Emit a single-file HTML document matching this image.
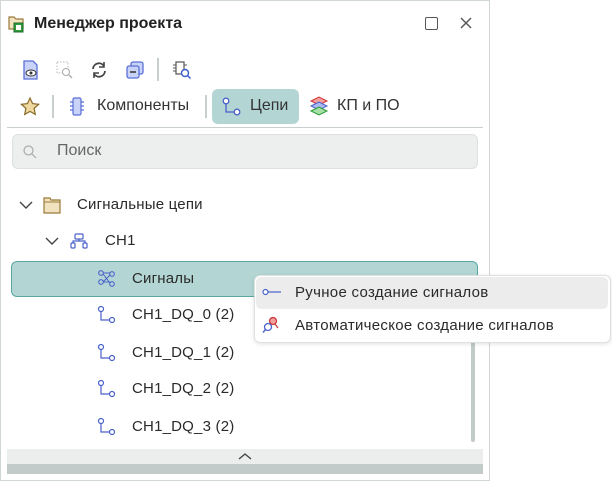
<!DOCTYPE html>
<html><head><meta charset="utf-8"><style>
*{margin:0;padding:0;box-sizing:border-box}
body{width:612px;height:481px;background:#fff;font-family:"Liberation Sans","DejaVu Sans",sans-serif;position:relative;overflow:hidden;color:#222}
.panel{position:absolute;left:0;top:0;width:490px;height:481px;border:1px solid #cfd6d4;background:#fff}
.abs{position:absolute}
.t{font-size:15px;color:#2a2a2a;white-space:nowrap;letter-spacing:0.2px}
svg{position:absolute;overflow:visible}
</style></head><body>
<div class="panel"></div>
<!-- title -->
<svg style="left:8px;top:14px" width="18" height="20" viewBox="0 0 18 20"><path d="M1 3h5l2 2h7v10H1z" fill="#f1e3c0" stroke="#9a7a3a" stroke-width="1.2"/><rect x="6" y="9" width="9" height="9" fill="#2e9b3c" stroke="#1d6e28"/><rect x="8" y="11" width="5" height="5" fill="#fff"/></svg>
<div class="abs" style="left:34px;top:15px;font-size:16px;font-weight:bold;color:#222">Менеджер проекта</div>
<div class="abs" style="left:425px;top:17px;width:13px;height:13px;border:1.5px solid #555;border-radius:2px"></div>
<svg style="left:460px;top:17px" width="12" height="12"><path d="M1 1L11 11M11 1L1 11" stroke="#555" stroke-width="1.4"/></svg>
<!-- toolbar -->
<svg style="left:22px;top:60px" width="18" height="20"><path d="M2 1h9l4 4v14H2z" fill="#c9d3f7" stroke="#5a6fd6" stroke-width="1.3"/><ellipse cx="9" cy="13" rx="5" ry="3" fill="#fff" stroke="#333"/><circle cx="9" cy="13" r="1.5" fill="#333"/></svg>
<svg style="left:56px;top:61px" width="18" height="18"><rect x="1" y="1" width="11" height="11" fill="none" stroke="#bbb" stroke-dasharray="1.5 1.5"/><circle cx="10" cy="11" r="3.5" fill="#fff" stroke="#aaa"/><path d="M13 14l3 3" stroke="#aaa" stroke-width="1.3"/></svg>
<svg style="left:90px;top:61px" width="18" height="18"><path d="M3 8a6 6 0 0 1 11-3M15 10a6 6 0 0 1-11 3" fill="none" stroke="#444" stroke-width="1.8"/><path d="M14 1v5h-5M4 17v-5h5" fill="none" stroke="#444" stroke-width="1.6"/></svg>
<svg style="left:126px;top:61px" width="18" height="18"><rect x="5" y="1" width="12" height="12" rx="2" fill="#c9d3f7" stroke="#5a6fd6" stroke-width="1.3"/><rect x="1" y="5" width="12" height="12" rx="2" fill="#c9d3f7" stroke="#5a6fd6" stroke-width="1.3"/><path d="M4 11h6" stroke="#333" stroke-width="1.5"/></svg>
<div class="abs" style="left:157px;top:58px;width:2px;height:23px;background:#c9cfcf"></div>
<svg style="left:172px;top:60px" width="20" height="20"><rect x="4" y="2" width="8" height="12" fill="#fff" stroke="#555" stroke-width="1.2"/><path d="M1 5h3M1 8h3M1 11h3M12 5h3" stroke="#555"/><circle cx="13" cy="13" r="3.5" fill="#fff" stroke="#3a5bd0" stroke-width="1.4"/><path d="M15.5 15.5l3 3" stroke="#3a5bd0" stroke-width="1.5"/></svg>
<!-- tabs -->
<svg style="left:20px;top:97px" width="20" height="19"><path d="M10 1l2.6 5.6 6 .7-4.5 4.1 1.2 6L10 14.4 4.7 17.4l1.2-6L1.4 7.3l6-.7z" fill="#f0d9a0" stroke="#8a6a2a" stroke-width="1.2"/></svg>
<div class="abs" style="left:52px;top:95px;width:2px;height:23px;background:#c9cfcf"></div>
<svg style="left:70px;top:97px" width="14" height="20"><rect x="3" y="1" width="8" height="17" rx="1.5" fill="#c9d3f7" stroke="#5a6fd6" stroke-width="1.2"/><path d="M0 5h3M0 9h3M0 13h3M11 5h3M11 9h3M11 13h3" stroke="#5a6fd6" stroke-width="1.2"/></svg>
<div class="abs t" style="left:97px;top:97px;font-size:16px;color:#333;letter-spacing:0">Компоненты</div>
<div class="abs" style="left:205px;top:95px;width:2px;height:23px;background:#c9cfcf"></div>
<div class="abs" style="left:212px;top:89px;width:87px;height:35px;background:#b3d6d5;border-radius:6px"></div>
<svg style="left:222px;top:97px" width="20" height="20"><circle cx="4" cy="4" r="2.8" fill="#fff" stroke="#4a62c9" stroke-width="1.3"/><circle cx="15" cy="15" r="2.8" fill="#fff" stroke="#4a62c9" stroke-width="1.3"/><path d="M4 7v8h8" fill="none" stroke="#4a62c9" stroke-width="1.3"/></svg>
<div class="abs t" style="left:250px;top:97px;font-size:16px;color:#333;letter-spacing:0">Цепи</div>
<svg style="left:309px;top:96px" width="20" height="22"><path d="M2 5l8-4 8 4-8 4z" fill="#f4a0a0" stroke="#c33" /><path d="M2 10l8-4 8 4-8 4z" fill="#a9baf5" stroke="#4a62c9"/><path d="M2 15l8-4 8 4-8 4z" fill="#a5e0a5" stroke="#2a9a3a"/></svg>
<div class="abs t" style="left:337px;top:97px;font-size:16px;color:#333;letter-spacing:0">КП и ПО</div>
<div class="abs" style="left:7px;top:127px;width:476px;height:1px;background:#c9cfcf"></div>
<!-- search -->
<div class="abs" style="left:12px;top:134px;width:466px;height:35px;background:#ecefee;border:1px solid #dde2e1;border-radius:6px"></div>
<svg style="left:23px;top:145px" width="14" height="14"><circle cx="5.5" cy="5.5" r="4.5" fill="none" stroke="#aaa" stroke-width="1.2"/><path d="M9 9l4 4" stroke="#aaa" stroke-width="1.2"/></svg>
<div class="abs t" style="left:57px;top:142px;font-size:16px;color:#666;letter-spacing:0">Поиск</div>
<!-- tree -->
<svg style="left:19px;top:200px" width="14" height="10"><path d="M1 2l6 6 6-6" fill="none" stroke="#444" stroke-width="1.4"/></svg>
<svg style="left:43px;top:196px" width="18" height="18"><path d="M1 2h6l1 2h9v13H1z" fill="#f1e3c0" stroke="#9a7a3a" stroke-width="1.2"/><path d="M1 6h16" stroke="#9a7a3a"/></svg>
<div class="abs t" style="left:77px;top:196px">Сигнальные цепи</div>
<svg style="left:45px;top:236px" width="14" height="10"><path d="M1 2l6 6 6-6" fill="none" stroke="#444" stroke-width="1.4"/></svg>
<svg style="left:70px;top:233px" width="18" height="16"><rect x="5" y="1" width="8" height="5" rx="1" fill="none" stroke="#4a62c9" stroke-width="1.2"/><path d="M9 6v2M3 10V8h12v2" fill="none" stroke="#4a62c9" stroke-width="1.2"/><rect x="1" y="10" width="4" height="5" rx="1" fill="none" stroke="#4a62c9" stroke-width="1.2"/><rect x="13" y="10" width="4" height="5" rx="1" fill="none" stroke="#4a62c9" stroke-width="1.2"/></svg>
<div class="abs t" style="left:105px;top:232px">CH1</div>
<div class="abs" style="left:11px;top:261px;width:397px;height:36px;background:#b3d6d5;border:1px solid #5aa7a2;border-radius:6px;border-right:none;border-top-right-radius:0;border-bottom-right-radius:0"></div>
<div class="abs" style="left:400px;top:261px;width:78px;height:14px;background:#b3d6d5;border:1px solid #5aa7a2;border-left:none;border-bottom:none;border-top-right-radius:6px"></div>
<svg style="left:98px;top:270px" width="18" height="18"><circle cx="3" cy="3" r="2.3" fill="none" stroke="#4a62c9" stroke-width="1.1"/><circle cx="14" cy="4" r="2.3" fill="none" stroke="#4a62c9" stroke-width="1.1"/><circle cx="3" cy="12" r="2.3" fill="none" stroke="#4a62c9" stroke-width="1.1"/><circle cx="14" cy="14" r="2.3" fill="none" stroke="#4a62c9" stroke-width="1.1"/><path d="M5 3h7M5 12l7-7M5 4l7 9M5 12h7" stroke="#4a62c9" stroke-width="1"/></svg>
<div class="abs t" style="left:132px;top:270px">Сигналы</div>
<!-- nets -->
<svg style="left:98px;top:306px" width="20" height="20"><circle cx="3" cy="3" r="2.5" fill="#fff" stroke="#4a62c9" stroke-width="1.2"/><circle cx="14" cy="14" r="2.5" fill="#fff" stroke="#4a62c9" stroke-width="1.2"/><path d="M3 5.5V14h8.5" fill="none" stroke="#4a62c9" stroke-width="1.2"/></svg>
<div class="abs t" style="left:132px;top:306px">CH1_DQ_0 (2)</div>
<svg style="left:98px;top:344px" width="20" height="20"><circle cx="3" cy="3" r="2.5" fill="#fff" stroke="#4a62c9" stroke-width="1.2"/><circle cx="14" cy="14" r="2.5" fill="#fff" stroke="#4a62c9" stroke-width="1.2"/><path d="M3 5.5V14h8.5" fill="none" stroke="#4a62c9" stroke-width="1.2"/></svg>
<div class="abs t" style="left:132px;top:344px">CH1_DQ_1 (2)</div>
<svg style="left:98px;top:380px" width="20" height="20"><circle cx="3" cy="3" r="2.5" fill="#fff" stroke="#4a62c9" stroke-width="1.2"/><circle cx="14" cy="14" r="2.5" fill="#fff" stroke="#4a62c9" stroke-width="1.2"/><path d="M3 5.5V14h8.5" fill="none" stroke="#4a62c9" stroke-width="1.2"/></svg>
<div class="abs t" style="left:132px;top:380px">CH1_DQ_2 (2)</div>
<svg style="left:98px;top:418px" width="20" height="20"><circle cx="3" cy="3" r="2.5" fill="#fff" stroke="#4a62c9" stroke-width="1.2"/><circle cx="14" cy="14" r="2.5" fill="#fff" stroke="#4a62c9" stroke-width="1.2"/><path d="M3 5.5V14h8.5" fill="none" stroke="#4a62c9" stroke-width="1.2"/></svg>
<div class="abs t" style="left:132px;top:418px">CH1_DQ_3 (2)</div>
<!-- scrollbar -->
<div class="abs" style="left:471px;top:330px;width:4px;height:112px;background:#c3cbca;border-radius:2px"></div>
<!-- bottom bar -->
<div class="abs" style="left:7px;top:449px;width:476px;height:15px;background:#eceeed"></div>
<div class="abs" style="left:7px;top:464px;width:476px;height:10px;background:#c3cbca"></div>
<svg style="left:238px;top:452px" width="14" height="8"><path d="M1 7l6-5 6 5" fill="none" stroke="#444" stroke-width="1.4"/></svg>
<!-- context menu -->
<div class="abs" style="left:254px;top:275px;width:357px;height:68px;background:#fff;border:1px solid #dde2e1;border-radius:6px;box-shadow:0 1px 4px rgba(0,0,0,.12)"></div>
<div class="abs" style="left:256px;top:277px;width:352px;height:32px;background:#ececec;border-radius:5px"></div>
<svg style="left:262px;top:288px" width="20" height="8"><circle cx="3.5" cy="4" r="2.5" fill="#fff" stroke="#4a62c9" stroke-width="1.2"/><path d="M6 4h13" stroke="#4a62c9" stroke-width="1.2"/></svg>
<div class="abs t" style="left:295px;top:284px;letter-spacing:0.3px">Ручное создание сигналов</div>
<svg style="left:262px;top:316px" width="18" height="18"><circle cx="11" cy="5" r="3.5" fill="#f4a0a0" stroke="#c33" stroke-width="1.2"/><path d="M13 8l3 4" stroke="#c33" stroke-width="1.2"/><circle cx="6" cy="11" r="3.5" fill="#fff" stroke="#4a62c9" stroke-width="1.3"/><path d="M3.5 13.5l-2.5 3" stroke="#4a62c9" stroke-width="1.4"/></svg>
<div class="abs t" style="left:295px;top:317px;letter-spacing:0.3px">Автоматическое создание сигналов</div>
</body></html>
